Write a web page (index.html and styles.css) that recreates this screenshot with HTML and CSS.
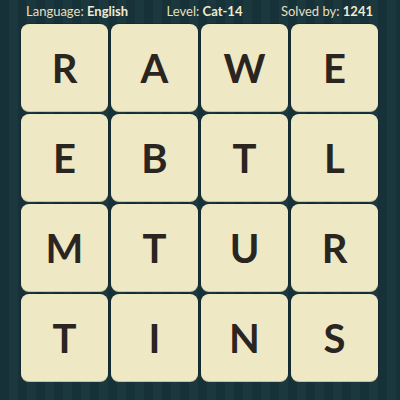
FILE: index.html
```html
<!DOCTYPE html>
<html>
<head>
<meta charset="utf-8">
<link rel="stylesheet" href="styles.css">
</head>
<body>
<div class="page">
  <div class="header">
    <span class="item"><span class="label">Language:</span> <b>English</b></span>
    <span class="item"><span class="label">Level:</span> <b>Cat-14</b></span>
    <span class="item"><span class="label">Solved by:</span> <b>1241</b></span>
  </div>
  <div class="grid">
    <div class="tile">R</div><div class="tile">A</div><div class="tile">W</div><div class="tile">E</div>
    <div class="tile">E</div><div class="tile">B</div><div class="tile">T</div><div class="tile">L</div>
    <div class="tile">M</div><div class="tile">T</div><div class="tile">U</div><div class="tile">R</div>
    <div class="tile">T</div><div class="tile">I</div><div class="tile">N</div><div class="tile">S</div>
  </div>
</div>
</body>
</html>
```
FILE: styles.css
```css
html, body { margin: 0; padding: 0; }
body {
  width: 400px; height: 400px; overflow: hidden;
  background: #173339;
  background-image: repeating-linear-gradient(90deg, #163137 0px, #163137 9px, #1a383e 9px, #1a383e 18px);
  font-family: Lato, "Open Sans", sans-serif;
}
.page { width: 400px; height: 400px; }
.header {
  height: 24px;
  display: flex;
  justify-content: space-between;
  align-items: center;
  padding: 0 27px 0 26px;
  box-sizing: border-box;
  color: #e6dfbf;
  font-size: 13px;
  line-height: 1;
  padding-bottom: 2px;
}
.header .label { font-weight: 400; }
.header b { font-weight: 700; color: #f1ead0; }
.grid {
  display: grid;
  grid-template-columns: repeat(4, 87px);
  grid-auto-rows: 87px;
  gap: 3px;
  padding-left: 21px;
}
.tile {
  background: #efe8c4;
  border-radius: 8px;
  box-shadow: 0 1px 0 #c9c29e, 0 0 0 1px rgba(0,0,0,0.15);
  display: flex;
  align-items: center;
  justify-content: center;
  color: #2a2520;
  font-size: 40px;
  font-weight: 700;
}
```
